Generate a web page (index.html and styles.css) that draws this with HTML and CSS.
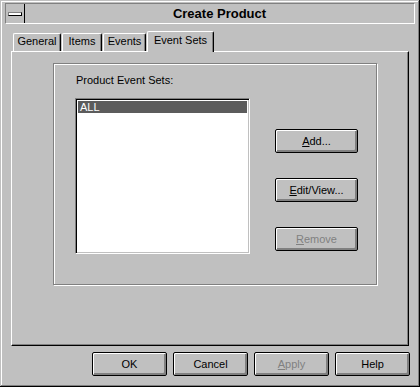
FILE: index.html
```html
<!DOCTYPE html>
<html lang="en">
<head>
  <meta charset="UTF-8" />
  <title>Create Product</title>
  <link rel="stylesheet" href="styles.css">
</head>
<body>
  <div class="window">
    <div class="titlebar">
      <div class="sysmenu"><span class="sysmenu-bar"></span></div>
      <div class="title">Create Product</div>
    </div>

    <div class="tabs">
      <div class="tab tab-general">General</div>
      <div class="tab tab-items">Items</div>
      <div class="tab tab-events">Events</div>
      <div class="tab tab-eventsets active">Event Sets</div>
    </div>

    <div class="panel">
      <div class="group">
        <div class="list-col">
          <div class="label">Product Event Sets:</div>
          <div class="listbox">
            <div class="list-item selected">ALL</div>
          </div>
        </div>
        <div class="btn-col">
          <button class="btn side"><u>A</u>dd...</button>
          <button class="btn side"><u>E</u>dit/View...</button>
          <button class="btn side disabled"><u>R</u>emove</button>
        </div>
      </div>
    </div>

    <div class="footer">
      <button class="btn wide">OK</button>
      <button class="btn wide">Cancel</button>
      <button class="btn wide disabled"><u>A</u>pply</button>
      <button class="btn wide">Help</button>
    </div>
  </div>
</body>
</html>
```

FILE: styles.css
```css
* {
  box-sizing: border-box;
}

body {
  margin: 0;
  background: #c0c0c0;
  font-family: "Liberation Sans", Arial, sans-serif;
  font-size: 11px;
  color: #000;
}

.window {
  width: 420px;
  height: 387px;
  padding: 3px 5px 0;
  background: #c0c0c0;
  box-shadow: inset -1px -1px #000, inset 1px 1px #c0c0c0,
              inset -2px -2px #808080, inset 2px 2px #fff;
}

/* title bar */
.titlebar {
  display: flex;
  height: 21px;
  border: 1px solid;
  border-color: #808080 #fff #fff #808080;
}

.sysmenu {
  width: 19px;
  border-right: 1px solid #000;
  display: flex;
  align-items: center;
  padding-left: 2px;
}

.sysmenu-bar {
  display: block;
  width: 14px;
  height: 4px;
  background: #fff;
  border: 1px solid;
  border-color: #808080 #000 #000 #808080;
}

.title {
  flex: 1;
  text-align: center;
  font-weight: bold;
  font-size: 13px;
  line-height: 19px;
}

/* tabs */
.tabs {
  display: flex;
  align-items: flex-end;
  gap: 1px;
  height: 20px;
  margin: 7px 0 0 8px;
}

.tab {
  height: 18px;
  padding: 1px 0 3px;
  line-height: 13px;
  text-align: center;
  border-top: 1px solid #fff;
  border-left: 1px solid #fff;
  border-right: 1px solid #000;
  border-radius: 2px 2px 0 0;
  box-shadow: inset -1px 0 #808080;
  background: #c0c0c0;
}

.tab-general { width: 48px; }
.tab-items { width: 40px; }
.tab-events { width: 43px; }
.tab-eventsets { width: 67px; }

.tab.active {
  position: relative;
  height: 21px;
  padding: 2px 0 5px;
  margin-bottom: -1px;
}

/* page */
.panel {
  width: 398px;
  height: 295px;
  margin-left: 6px;
  padding: 11px 0 0 41px;
  border: 1px solid;
  border-color: #fff #000 #000 #fff;
  box-shadow: inset -1px -1px #808080;
}

.group {
  display: flex;
  width: 324px;
  height: 222px;
  padding: 10px 0 0 21px;
  border: 1px solid #808080;
  box-shadow: inset 1px 1px #fff, 1px 1px #fff;
}

.label {
  line-height: 13px;
  padding-left: 1px;
  margin-bottom: 11px;
}

.listbox {
  width: 175px;
  height: 156px;
  padding: 2px;
  background: #fff;
  border: 1px solid;
  border-color: #808080 #fff #fff #808080;
  box-shadow: inset 1px 1px #000, inset -1px -1px #c0c0c0;
}

.list-item {
  line-height: 12px;
  padding-left: 2px;
}

.list-item.selected {
  background: #5c5c5c;
  color: #fff;
}

.btn-col {
  display: flex;
  flex-direction: column;
  gap: 25px;
  margin: 55px 0 0 25px;
}

/* buttons */
.btn {
  height: 24px;
  padding: 0;
  font-family: inherit;
  font-size: 11px;
  line-height: 13px;
  color: #000;
  background: #c0c0c0;
  border: 1px solid #000;
  border-radius: 2px;
  box-shadow: inset 1px 1px #fff, inset -2px -2px #808080;
}

.btn.side {
  width: 83px;
  padding-top: 1px;
}

.btn.wide {
  width: 75px;
}

.btn.disabled {
  color: #808080;
}

.footer {
  display: flex;
  justify-content: flex-end;
  gap: 6px;
  margin: 6px 5px 0 0;
}
```
